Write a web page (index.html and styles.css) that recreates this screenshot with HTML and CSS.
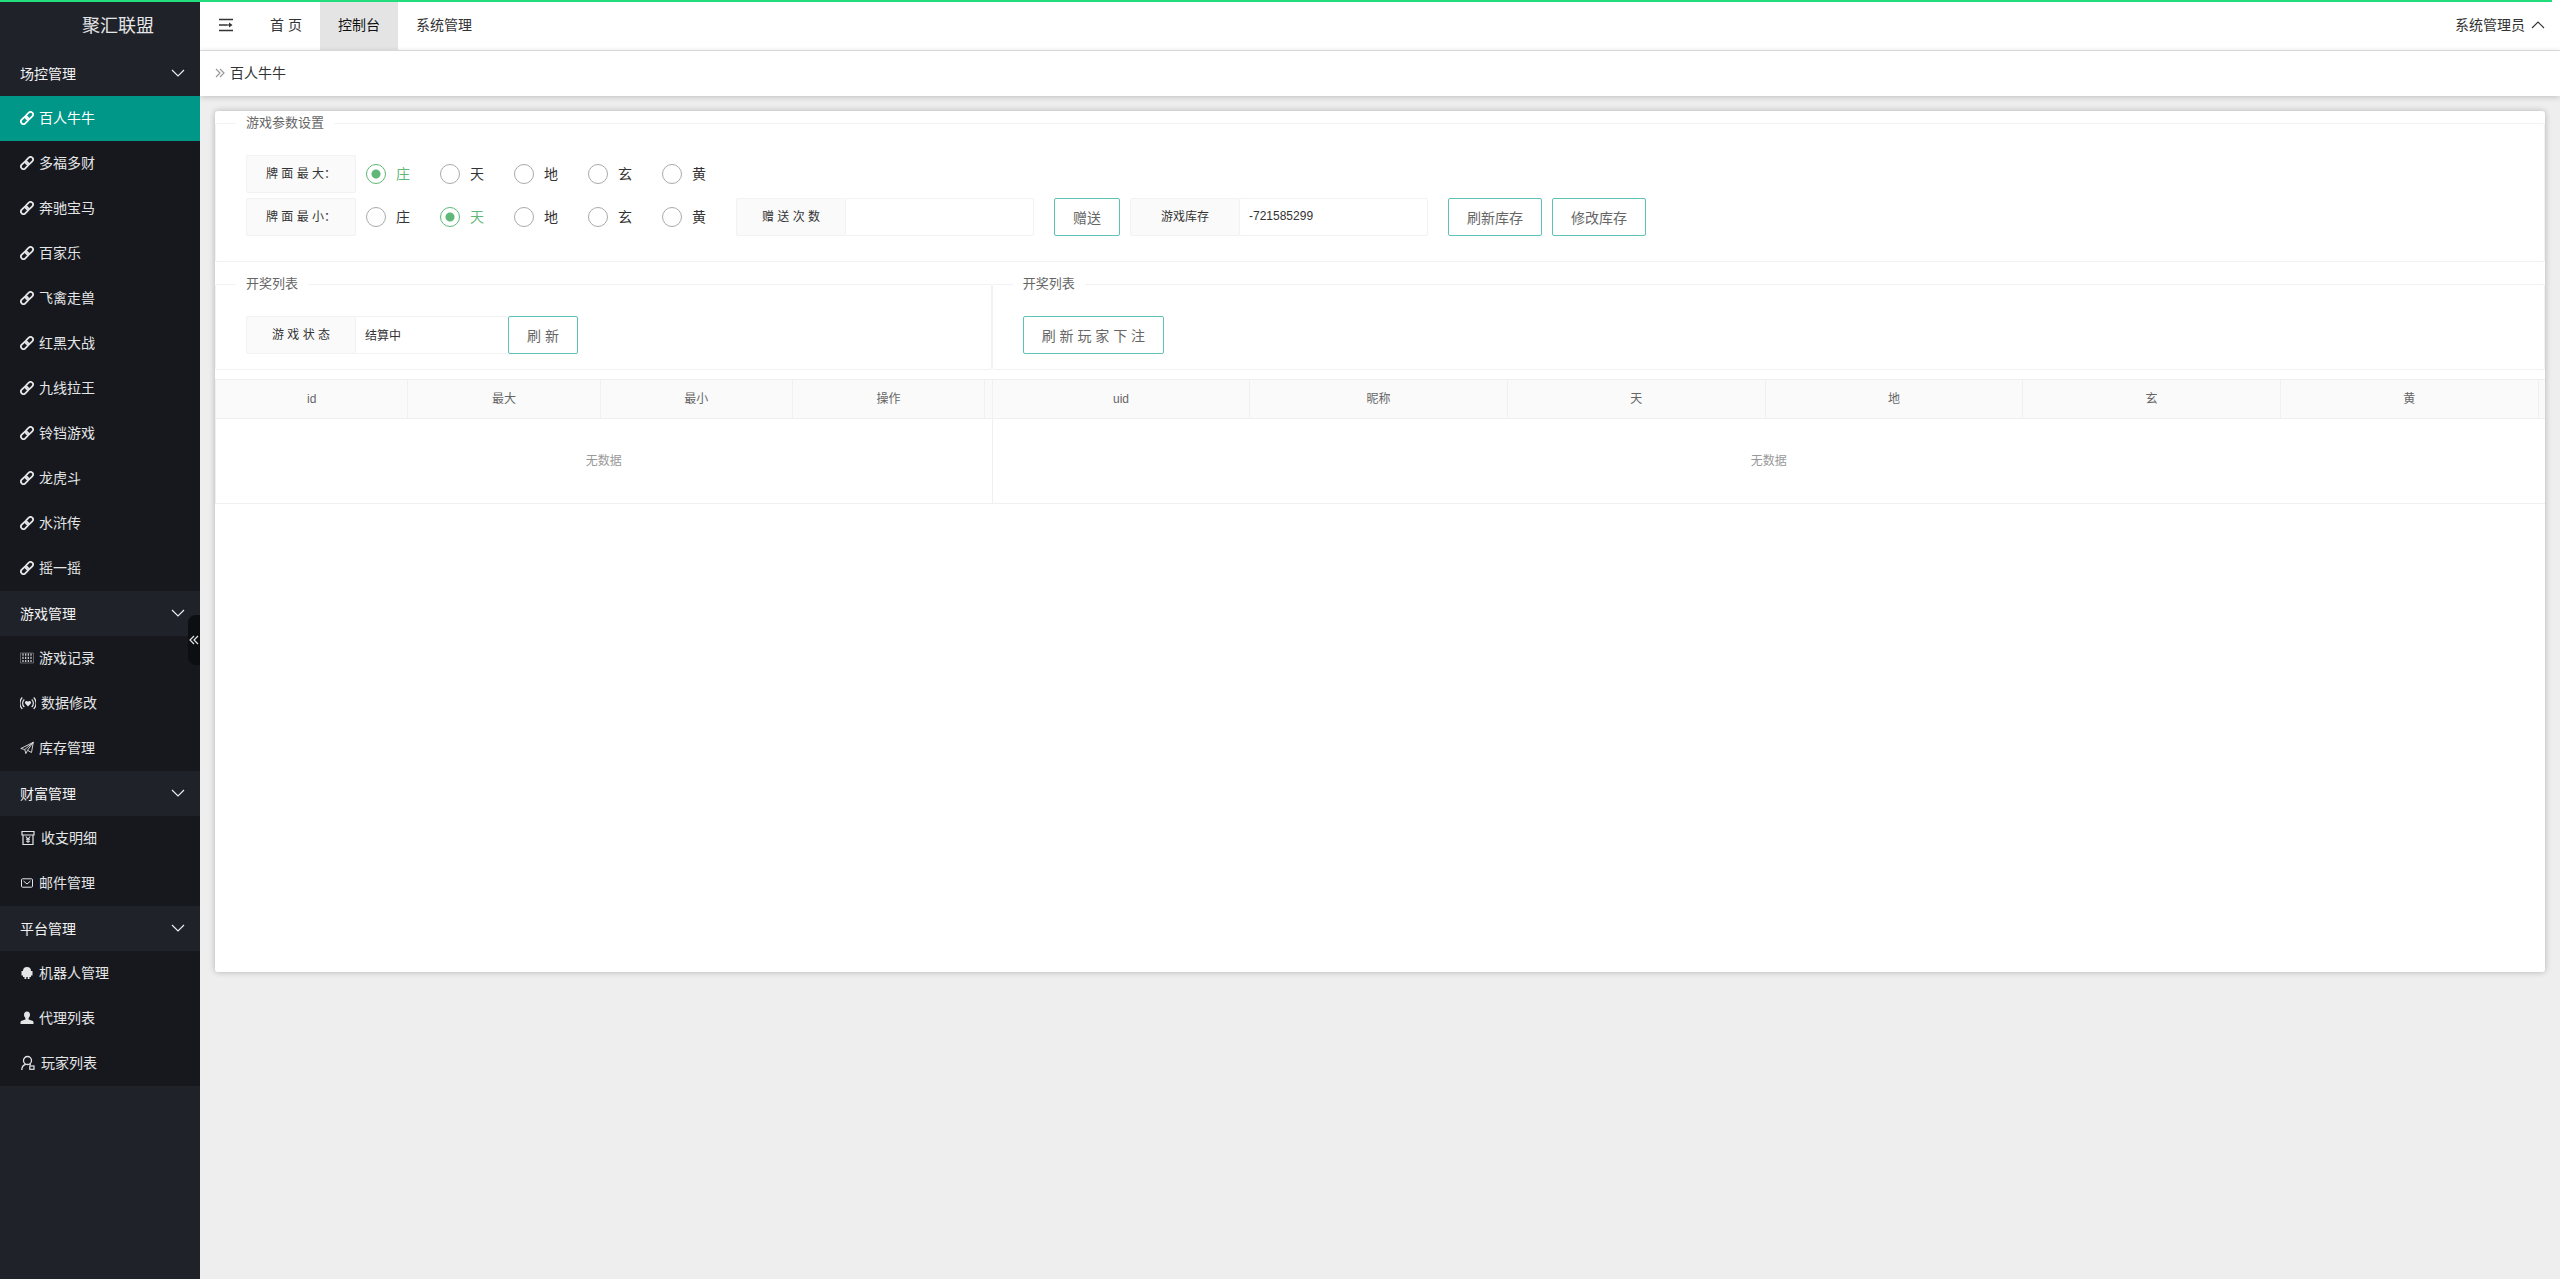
FILE: index.html
```html
<!DOCTYPE html>
<html lang="zh-CN">
<head>
  <meta charset="utf-8">
  <title>聚汇联盟</title>
  <link rel="stylesheet" href="styles.css">
</head>
<body>
  <svg class="sprite" aria-hidden="true">
    <symbol id="i-link" viewBox="0 0 14 14"><g fill="none" stroke="currentColor" stroke-width="1.8"><rect x="-4.2" y="-2.5" width="8.4" height="5" rx="2.5" transform="translate(9.3 4.7) rotate(-45)"/><rect x="-4.2" y="-2.5" width="8.4" height="5" rx="2.5" transform="translate(4.7 9.3) rotate(-45)"/></g></symbol>
    <symbol id="i-down" viewBox="0 0 14 14"><path d="M1 4l6 6 6-6" fill="none" stroke="currentColor" stroke-width="1.1"/></symbol>
    <symbol id="i-grid" viewBox="0 0 14 14"><path d="M.5 2v10h13V2z" fill="none" stroke="currentColor" stroke-width=".6" opacity=".6"/><path d="M3 2.500v9.500M5.700 2.500v9.500M8.300 2.500v9.500M11 2.500v9.500" fill="none" stroke="currentColor" stroke-width="1.1" stroke-dasharray="2.200 1"/></symbol>
    <symbol id="i-signal" viewBox="0 0 16 16"><path d="M8 11.500L5.200 8.600a1.600 1.600 0 012.800-1.800 1.600 1.600 0 012.800 1.800z" fill="currentColor"/><path d="M4.300 4.500a5 5 0 000 7.500M11.700 4.500a5 5 0 010 7.500M2.300 2.500a8 8 0 000 11.500M13.700 2.500a8 8 0 010 11.500" fill="none" stroke="currentColor" stroke-width="1.2"/></symbol>
    <symbol id="i-plane" viewBox="0 0 14 14"><path d="M.8 7.500L13.300 1.300 11.500 11.500 7.500 9.300 5.800 12.600 4.800 8.500zM4.800 8.500l8.500-7.200-5.800 8" fill="none" stroke="currentColor" stroke-width=".9"/></symbol>
    <symbol id="i-bill" viewBox="0 0 16 16"><path d="M2 1.500h12v3.500H2zM3 5v9.500h10V5" fill="none" stroke="currentColor" stroke-width="1.200"/><path d="M5.800 6.500L8 9l2.200-2.500M8 9v4M6 9.300h4M6 11.200h4" fill="none" stroke="currentColor" stroke-width="1.100"/></symbol>
    <symbol id="i-mail" viewBox="0 0 14 14"><rect x="1.500" y="2.800" width="11" height="8.400" rx="1" fill="none" stroke="currentColor"/><path d="M3.500 5L7 8l3.500-3" fill="none" stroke="currentColor"/></symbol>
    <symbol id="i-robot" viewBox="0 0 14 14"><path d="M3 5a4 4 0 018 0h1.500v4.500H11V11H9.500v2h-1.800v-2H6.300v2H4.500v-2H3V9.500H1.500V5z" fill="currentColor"/></symbol>
    <symbol id="i-user" viewBox="0 0 14 14"><path d="M7 .5c2 0 3 1.400 3 3.200 0 1.500-.8 2.600-1.400 3.200v1.600l3.700 1.300c.9.300 1.200.8 1.200 1.700v1.500H.500v-1.500c0-.9.300-1.400 1.200-1.700l3.700-1.300V6.900C4.800 6.300 4 5.200 4 3.700 4 1.900 5 .5 7 .5z" fill="currentColor"/></symbol>
    <symbol id="i-player" viewBox="0 0 16 16"><circle cx="7.500" cy="5.500" r="4" fill="none" stroke="currentColor" stroke-width="1.300"/><path d="M1.800 15c0-3 1.600-5 4-5.600M9.500 9l1.200 1.200" fill="none" stroke="currentColor" stroke-width="1.300"/><rect x="9.800" y="11" width="4.200" height="3.300" fill="none" stroke="currentColor" stroke-width="1.200"/></symbol>
    <symbol id="i-menu" viewBox="0 0 16 14"><path d="M1 1.500h14M1 7h8M1 12.500h14" stroke="currentColor" stroke-width="1.600"/><path d="M9 7h4" stroke="currentColor" stroke-width="1.200"/><path d="M11 4.600L14.500 7 11 9.400z" fill="currentColor"/></symbol>
    <symbol id="i-double" viewBox="0 0 10 10"><path d="M1 1l4 4-4 4M5 1l4 4-4 4" fill="none" stroke="currentColor" stroke-width="1.200"/></symbol>
  </svg>

  <div class="progress"></div>

  <aside class="side">
    <h1 class="logo">聚汇联盟</h1>
    <nav>
      <button class="group">场控管理<svg class="ico"><use href="#i-down"/></svg></button>
      <ul class="menu">
        <li><a href="#" class="active"><svg class="ico"><use href="#i-link"/></svg>百人牛牛</a></li>
        <li><a href="#"><svg class="ico"><use href="#i-link"/></svg>多福多财</a></li>
        <li><a href="#"><svg class="ico"><use href="#i-link"/></svg>奔驰宝马</a></li>
        <li><a href="#"><svg class="ico"><use href="#i-link"/></svg>百家乐</a></li>
        <li><a href="#"><svg class="ico"><use href="#i-link"/></svg>飞禽走兽</a></li>
        <li><a href="#"><svg class="ico"><use href="#i-link"/></svg>红黑大战</a></li>
        <li><a href="#"><svg class="ico"><use href="#i-link"/></svg>九线拉王</a></li>
        <li><a href="#"><svg class="ico"><use href="#i-link"/></svg>铃铛游戏</a></li>
        <li><a href="#"><svg class="ico"><use href="#i-link"/></svg>龙虎斗</a></li>
        <li><a href="#"><svg class="ico"><use href="#i-link"/></svg>水浒传</a></li>
        <li><a href="#"><svg class="ico"><use href="#i-link"/></svg>摇一摇</a></li>
      </ul>
      <button class="group">游戏管理<svg class="ico"><use href="#i-down"/></svg></button>
      <ul class="menu">
        <li><a href="#"><svg class="ico"><use href="#i-grid"/></svg>游戏记录</a></li>
        <li><a href="#"><svg class="ico ico-lg"><use href="#i-signal"/></svg>数据修改</a></li>
        <li><a href="#"><svg class="ico"><use href="#i-plane"/></svg>库存管理</a></li>
      </ul>
      <button class="group">财富管理<svg class="ico"><use href="#i-down"/></svg></button>
      <ul class="menu">
        <li><a href="#"><svg class="ico ico-lg"><use href="#i-bill"/></svg>收支明细</a></li>
        <li><a href="#"><svg class="ico"><use href="#i-mail"/></svg>邮件管理</a></li>
      </ul>
      <button class="group">平台管理<svg class="ico"><use href="#i-down"/></svg></button>
      <ul class="menu">
        <li><a href="#"><svg class="ico"><use href="#i-robot"/></svg>机器人管理</a></li>
        <li><a href="#"><svg class="ico"><use href="#i-user"/></svg>代理列表</a></li>
        <li><a href="#"><svg class="ico ico-lg"><use href="#i-player"/></svg>玩家列表</a></li>
      </ul>
    </nav>
    <button class="fold" aria-label="收起"><svg><use href="#i-double"/></svg></button>
  </aside>

  <div class="page">
    <header class="topbar">
      <button class="toggle" aria-label="菜单"><svg><use href="#i-menu"/></svg></button>
      <nav class="tabs">
        <a href="#">首 页</a>
        <a href="#" class="on">控制台</a>
        <a href="#">系统管理</a>
      </nav>
      <a href="#" class="account">系统管理员<svg class="ico"><use href="#i-down"/></svg></a>
    </header>
    <div class="crumb"><svg><use href="#i-double"/></svg>百人牛牛</div>

    <main class="body">
      <div class="card">
        <fieldset class="params">
          <legend>游戏参数设置</legend>
          <div class="row">
            <span class="tag">牌 面 最 大：</span>
            <div class="radios">
              <label><input type="radio" name="max" checked><span>庄</span></label>
              <label><input type="radio" name="max"><span>天</span></label>
              <label><input type="radio" name="max"><span>地</span></label>
              <label><input type="radio" name="max"><span>玄</span></label>
              <label><input type="radio" name="max"><span>黄</span></label>
            </div>
          </div>
          <div class="row">
            <span class="tag">牌 面 最 小：</span>
            <div class="radios">
              <label><input type="radio" name="min"><span>庄</span></label>
              <label><input type="radio" name="min" checked><span>天</span></label>
              <label><input type="radio" name="min"><span>地</span></label>
              <label><input type="radio" name="min"><span>玄</span></label>
              <label><input type="radio" name="min"><span>黄</span></label>
            </div>
            <div class="field">
              <label class="tag" for="times">赠 送 次 数</label>
              <input type="text" id="times">
            </div>
            <button class="btn">赠送</button>
            <div class="field">
              <label class="tag" for="stock">游戏库存</label>
              <input type="text" id="stock" value="-721585299">
            </div>
            <button class="btn">刷新库存</button>
            <button class="btn">修改库存</button>
          </div>
        </fieldset>

        <div class="split">
          <section>
            <fieldset>
              <legend>开奖列表</legend>
              <div class="row">
                <div class="field status">
                  <label class="tag" for="status">游 戏 状 态</label>
                  <input type="text" id="status" value="结算中">
                </div>
                <button class="btn">刷 新</button>
              </div>
            </fieldset>
            <table>
              <thead>
                <tr><th>id</th><th>最大</th><th>最小</th><th>操作</th><th class="gutter"></th></tr>
              </thead>
              <tbody>
                <tr><td colspan="5">无数据</td></tr>
              </tbody>
            </table>
          </section>
          <section>
            <fieldset>
              <legend>开奖列表</legend>
              <div class="row">
                <button class="btn">刷 新 玩 家 下 注</button>
              </div>
            </fieldset>
            <table>
              <thead>
                <tr><th>uid</th><th>昵称</th><th>天</th><th>地</th><th>玄</th><th>黄</th><th class="gutter"></th></tr>
              </thead>
              <tbody>
                <tr><td colspan="7">无数据</td></tr>
              </tbody>
            </table>
          </section>
        </div>
      </div>
    </main>
  </div>
</body>
</html>
```
FILE: styles.css
```css
* {
  box-sizing: border-box;
}
body {
  display: flex;
  min-height: 100vh;
  margin: 0;
  background-color: #eee;
  color: #333;
  font: 14px/24px "Liberation Sans", "Noto Sans CJK SC", sans-serif;
}
a {
  color: inherit;
  text-decoration: none;
}
button,
input {
  font-family: inherit;
  color: inherit;
}
button {
  padding: 0;
  border: none;
  background: none;
  font-size: 14px;
  cursor: pointer;
}
.sprite {
  position: absolute;
  width: 0;
  height: 0;
}
.ico {
  width: 14px;
  height: 14px;
  flex-shrink: 0;
}
.ico-lg {
  width: 16px;
  height: 16px;
}
/* loading bar above everything */
.progress {
  position: fixed;
  top: 0;
  left: 0;
  right: 8px;
  height: 2px;
  background-color: #22dd7c;
  z-index: 10;
}

/* sidebar */
.side {
  position: relative;
  width: 200px;
  flex-shrink: 0;
  background-color: #20222a;
  color: #e4e5e6;
}
.logo {
  height: 51px;
  margin: 0;
  padding-left: 36px;
  font-size: 18px;
  font-weight: normal;
  line-height: 53px;
  text-align: center;
}
.group {
  display: flex;
  justify-content: space-between;
  align-items: center;
  width: 100%;
  height: 45px;
  padding: 0 15px 2px 20px;
  color: #f2f2f2;
}
.menu {
  margin: 0;
  padding: 0;
  list-style: none;
  background-color: #16181d;
}
.menu a {
  display: flex;
  align-items: center;
  gap: 5px;
  height: 45px;
  padding: 0 0 2px 20px;
}
.menu .active {
  background-color: #009688;
  color: #fff;
}
.fold {
  position: absolute;
  top: 615px;
  right: 0;
  display: flex;
  align-items: center;
  justify-content: center;
  width: 12px;
  height: 50px;
  border-radius: 8px 0 0 8px;
  background-color: #0d0e11;
}
.fold svg {
  width: 10px;
  height: 10px;
  flex-shrink: 0;
  transform: rotate(180deg);
}

/* top bar */
.page {
  display: flex;
  flex-direction: column;
  flex: 1;
  min-width: 0;
}
.topbar {
  display: flex;
  align-items: center;
  height: 51px;
  padding: 0 15px 0 18px;
  background-color: #fff;
  border-bottom: 1px solid #e6e6e6;
}
.toggle {
  display: flex;
  margin-right: 18px;
}
.toggle svg {
  width: 16px;
  height: 14px;
}
.tabs {
  display: flex;
  flex: 1;
}
.tabs a {
  padding: 0 18px;
  line-height: 50px;
}
.tabs .on {
  background-color: #e4e4e4;
  color: #111;
}
.account {
  display: flex;
  align-items: center;
  gap: 6px;
}
.account svg {
  transform: rotate(180deg);
}
.crumb {
  display: flex;
  align-items: center;
  gap: 5px;
  height: 45px;
  padding: 0 0 2px 15px;
  background-color: #fff;
  box-shadow: 0 1px 6px rgba(0, 0, 0, 0.2);
}
.crumb svg {
  width: 10px;
  height: 10px;
  color: #999;
}

/* content */
.body {
  flex: 1;
  padding: 15px 15px 30px;
}
.card {
  min-height: calc(100vh - 418px);
  border-radius: 3px;
  background-color: #fff;
  box-shadow: 0 0 6px rgba(0, 0, 0, 0.25);
}
fieldset {
  min-width: 0;
  margin: 0;
  padding: 20px 30px 15px;
  border: 1px solid #f2f2f2;
  border-radius: 2px;
}
.params {
  margin-bottom: 10px;
  padding-bottom: 25px;
}
legend {
  margin-left: -10px;
  padding: 0 10px;
  color: #666;
  font-size: 13px;
  line-height: 24px;
}
.row {
  display: flex;
}
.row + .row {
  margin-top: 5px;
}
.tag {
  width: 110px;
  height: 38px;
  flex-shrink: 0;
  border: 1px solid #f2f2f2;
  border-radius: 2px;
  background-color: #fafafa;
  font-size: 12px;
  line-height: 36px;
  text-align: center;
  white-space: nowrap;
}
.radios {
  display: flex;
  padding-left: 10px;
}
.radios label {
  display: flex;
  align-items: center;
  gap: 10px;
  margin-right: 30px;
}
.radios input {
  appearance: none;
  width: 20px;
  height: 20px;
  margin: 0;
  border: 1px solid #aaa;
  border-radius: 50%;
}
.radios input:checked {
  border-color: #5fb878;
  background: radial-gradient(circle, #5fb878 4px, #fff 5px);
}
.radios input:checked + span {
  color: #5fb878;
}
.field {
  display: flex;
  margin-right: 20px;
}
.field input {
  width: 189px;
  height: 38px;
  margin-left: -1px;
  padding: 0 9px 2px;
  border: 1px solid #f2f2f2;
  border-radius: 2px;
  background-color: #fff;
  font-size: 12px;
}
.status {
  margin-right: 0;
}
.status input {
  width: 153px;
  border-right: none;
}
.btn {
  height: 38px;
  margin-right: 10px;
  padding: 0 18px;
  border: 1px solid #5fc1b7;
  border-radius: 2px;
  background-color: #fff;
  color: #666;
  white-space: nowrap;
}

.split {
  display: grid;
  grid-template-columns: 1fr 2fr;
}
table {
  width: 100%;
  margin-top: 9px;
  border-collapse: collapse;
  table-layout: fixed;
  font-size: 12px;
  text-align: center;
}
th,
td {
  padding: 0;
  border: 1px solid #f0f0f0;
}
th {
  height: 39px;
  background-color: #fafafa;
  color: #666;
  font-weight: normal;
}
td {
  height: 85px;
  color: #999;
}
th:last-child,
td:last-child {
  border-right: none;
}
.gutter {
  width: 7px;
}
```
